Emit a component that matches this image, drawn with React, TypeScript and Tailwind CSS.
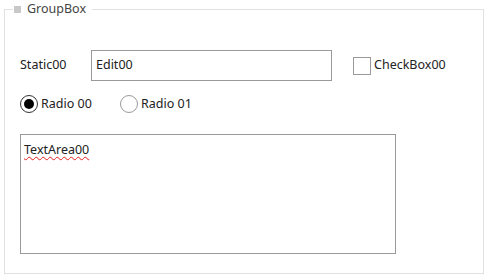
import React from 'react';

export default function App() {
  return (
    <div className="w-[488px] h-[278px] bg-white pl-1 text-[12.5px] text-[#222]" style={{ fontFamily: '"Noto Sans", "Open Sans", sans-serif' }}>
      <fieldset className="w-[480px] h-[274px] border border-[#e1e1e1]">
        <legend className="ml-[8px] h-[18px] px-[1px] flex items-center">
          <span className="w-[7px] h-[7px] bg-[#c8c8c8] mr-[6px]" />
          <span className="pr-[5px] text-[#444]">GroupBox</span>
        </legend>

        <div className="pl-[15px]">
          {/* row 1 */}
          <div className="mt-[32px] flex items-center h-[31px]">
            <span className="w-[71px]">Static00</span>
            <div className="w-[241px] h-[31px] border border-[#9a9a9a] flex items-center pl-[4px]">Edit00</div>
            <div className="ml-[21px] flex items-center">
              <span className="w-[18px] h-[18px] border border-[#9a9a9a]" />
              <span className="ml-[3px]">CheckBox00</span>
            </div>
          </div>

          {/* row 2 */}
          <div className="mt-[14px] flex items-center h-[18px]">
            <div className="flex items-center w-[100px]">
              <span className="w-[18px] h-[18px] rounded-full border border-[#333] flex items-center justify-center">
                <span className="w-[10px] h-[10px] rounded-full bg-black" />
              </span>
              <span className="ml-[3px]">Radio 00</span>
            </div>
            <div className="flex items-center">
              <span className="w-[18px] h-[18px] rounded-full border border-[#9a9a9a]" />
              <span className="ml-[3px]">Radio 01</span>
            </div>
          </div>

          {/* textarea */}
          <div className="mt-[21px] w-[376px] h-[120px] border border-[#9a9a9a] px-[3px] pt-[6px]">
            <span className="underline decoration-wavy decoration-[#e02020] decoration-1 underline-offset-2">TextArea00</span>
          </div>
        </div>
      </fieldset>
    </div>
  );
}
